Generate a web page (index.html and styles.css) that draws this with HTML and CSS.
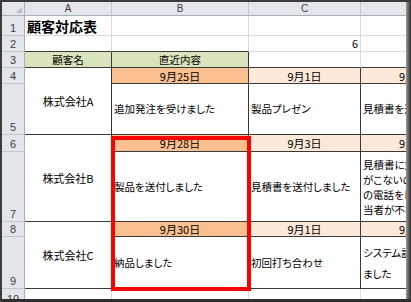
FILE: index.html
```html
<!DOCTYPE html>
<html>
  <head>
    <meta charset="utf-8">
    <title>顧客対応表</title>
    <link rel="stylesheet" href="styles.css">
  </head>
  <body>
    <div class="frame">
      <div class="frame-body">
        <div class="sheet">
          <!-- column headers -->
          <div class="corner">
            <svg width="6" height="6" viewBox="0 0 6 6"><polygon points="6,0 6,6 0,6" fill="#b9bec6"/></svg>
          </div>
          <div class="ch">A</div>
          <div class="ch">B</div>
          <div class="ch">C</div>
          <div class="ch"></div>

          <!-- row 1 -->
          <div class="rh">1</div>
          <div class="cell title">顧客対応表</div>
          <div class="cell"></div>
          <div class="cell"></div>
          <div class="cell"></div>

          <!-- row 2 -->
          <div class="rh">2</div>
          <div class="cell under"></div>
          <div class="cell under"></div>
          <div class="cell num">6</div>
          <div class="cell"></div>

          <!-- row 3 -->
          <div class="rh">3</div>
          <div class="cell t head">顧客名</div>
          <div class="cell t head">直近内容</div>
          <div class="cell under"></div>
          <div class="cell under"></div>

          <!-- rows 4-5 -->
          <div class="rh">4</div>
          <div class="cell t company span2">株式会社A</div>
          <div class="cell t date hot">9月25日</div>
          <div class="cell t date">9月1日</div>
          <div class="cell t date">9月8日</div>
          <div class="rh">5</div>
          <div class="cell t note">追加発注を受けました</div>
          <div class="cell t note">製品プレゼン</div>
          <div class="cell t note">見積書を送付しました</div>

          <!-- rows 6-7 -->
          <div class="rh">6</div>
          <div class="cell t company span2">株式会社B</div>
          <div class="cell t date hot">9月28日</div>
          <div class="cell t date">9月3日</div>
          <div class="cell t date">9月8日</div>
          <div class="rh">7</div>
          <div class="cell t note">製品を送付しました</div>
          <div class="cell t note">見積書を送付しました</div>
          <div class="cell t note wrap">見積書に対する返事<br>がこないので確認<br>の電話をしたが担<br>当者が不在でした</div>

          <!-- rows 8-9 -->
          <div class="rh">8</div>
          <div class="cell t company span2">株式会社C</div>
          <div class="cell t date hot">9月30日</div>
          <div class="cell t date">9月1日</div>
          <div class="cell t date">9月8日</div>
          <div class="rh">9</div>
          <div class="cell t note">納品しました</div>
          <div class="cell t note">初回打ち合わせ</div>
          <div class="cell t note wrap loose">システム設定の説明をし<br>ました</div>

          <!-- row 10 -->
          <div class="rh">10</div>
          <div class="cell"></div>
          <div class="cell"></div>
          <div class="cell"></div>
          <div class="cell"></div>

          <!-- highlight round B6:B9, drawn over the cells -->
          <div class="mark"></div>
        </div>
        <div class="edge-right"></div>
      </div>
      <div class="edge-bottom"></div>
    </div>
  </body>
</html>
```

FILE: styles.css
```css
html, body {
  margin: 0;
  padding: 0;
  background: #fff;
  color: #000;
  font-family: "Noto Sans CJK JP", sans-serif;
  font-size: 11px;
  overflow: hidden;
}
.frame {
  width: 411px;
  height: 302px;
  box-sizing: border-box;
  border-top: 2px solid #3c3c3c;
  border-left: 2px solid #3c3c3c;
  display: flex;
  flex-direction: column;
}
.frame-body {
  flex: 1;
  min-height: 0;
  display: flex;
}
.edge-right {
  width: 5px;
  background: linear-gradient(to right, #9a9a9a, #2b2b2b);
}
.edge-bottom {
  height: 3px;
  background: #2e2e2e;
}

/* worksheet grid */
.sheet {
  position: relative;
  flex: 1;
  min-width: 0;
  overflow: hidden;
  display: grid;
  grid-template-columns: 23px 87px 137px 112px 111px;
  grid-template-rows: 14px 20px 16px 16px 16px 51px 17px 70px 15px 52px 18px;
}
.corner, .ch, .rh {
  box-sizing: border-box;
  background: #e2e5ea;
  font-family: "Liberation Sans", sans-serif;
  color: #3f3f3f;
  display: flex;
  justify-content: center;
}
.corner {
  border-right: 1px solid #a7afba;
  border-bottom: 1px solid #a7afba;
  align-items: flex-end;
  justify-content: flex-end;
  padding: 0 2px 2px 0;
}
.ch {
  font-size: 10px;
  align-items: center;
  border-right: 1px solid #c3c8d0;
  border-bottom: 1px solid #a7afba;
}
.rh {
  font-size: 11px;
  align-items: flex-end;
  line-height: 13px;
  border-right: 1px solid #a7afba;
  border-bottom: 1px solid #c3c8d0;
}

.cell {
  box-sizing: border-box;
  border-right: 1px solid #dadada;
  border-bottom: 1px solid #dadada;
  padding: 0 2px;
  display: flex;
  align-items: center;
  white-space: nowrap;
  overflow: hidden;
  font-size: 10.5px;
  line-height: 14px;
  font-feature-settings: "palt";
}
.cell.under {
  border-bottom-color: #3a3a3a;
}
.cell.t {
  border-right-color: #3a3a3a;
  border-bottom-color: #3a3a3a;
}
.title {
  font-size: 14px;
  font-weight: bold;
  align-items: flex-end;
  padding-bottom: 2px;
}
.num {
  font-size: 11px;
  justify-content: flex-end;
  align-items: flex-end;
  padding-bottom: 1px;
}
.head {
  justify-content: center;
  background: #d8e4bc;
}
.company {
  font-size: 11px;
  justify-content: center;
}
.span2 {
  grid-row: span 2;
}
.date {
  font-size: 11px;
  justify-content: center;
  background: #fde9d9;
}
.date.hot {
  background: #fac090;
}
.wrap {
  line-height: 15px;
}
.wrap.loose {
  line-height: 21px;
}

.mark {
  position: absolute;
  left: 109px;
  top: 134px;
  width: 140px;
  height: 155px;
  box-sizing: border-box;
  border: 4px solid #ff0000;
  pointer-events: none;
}
```
